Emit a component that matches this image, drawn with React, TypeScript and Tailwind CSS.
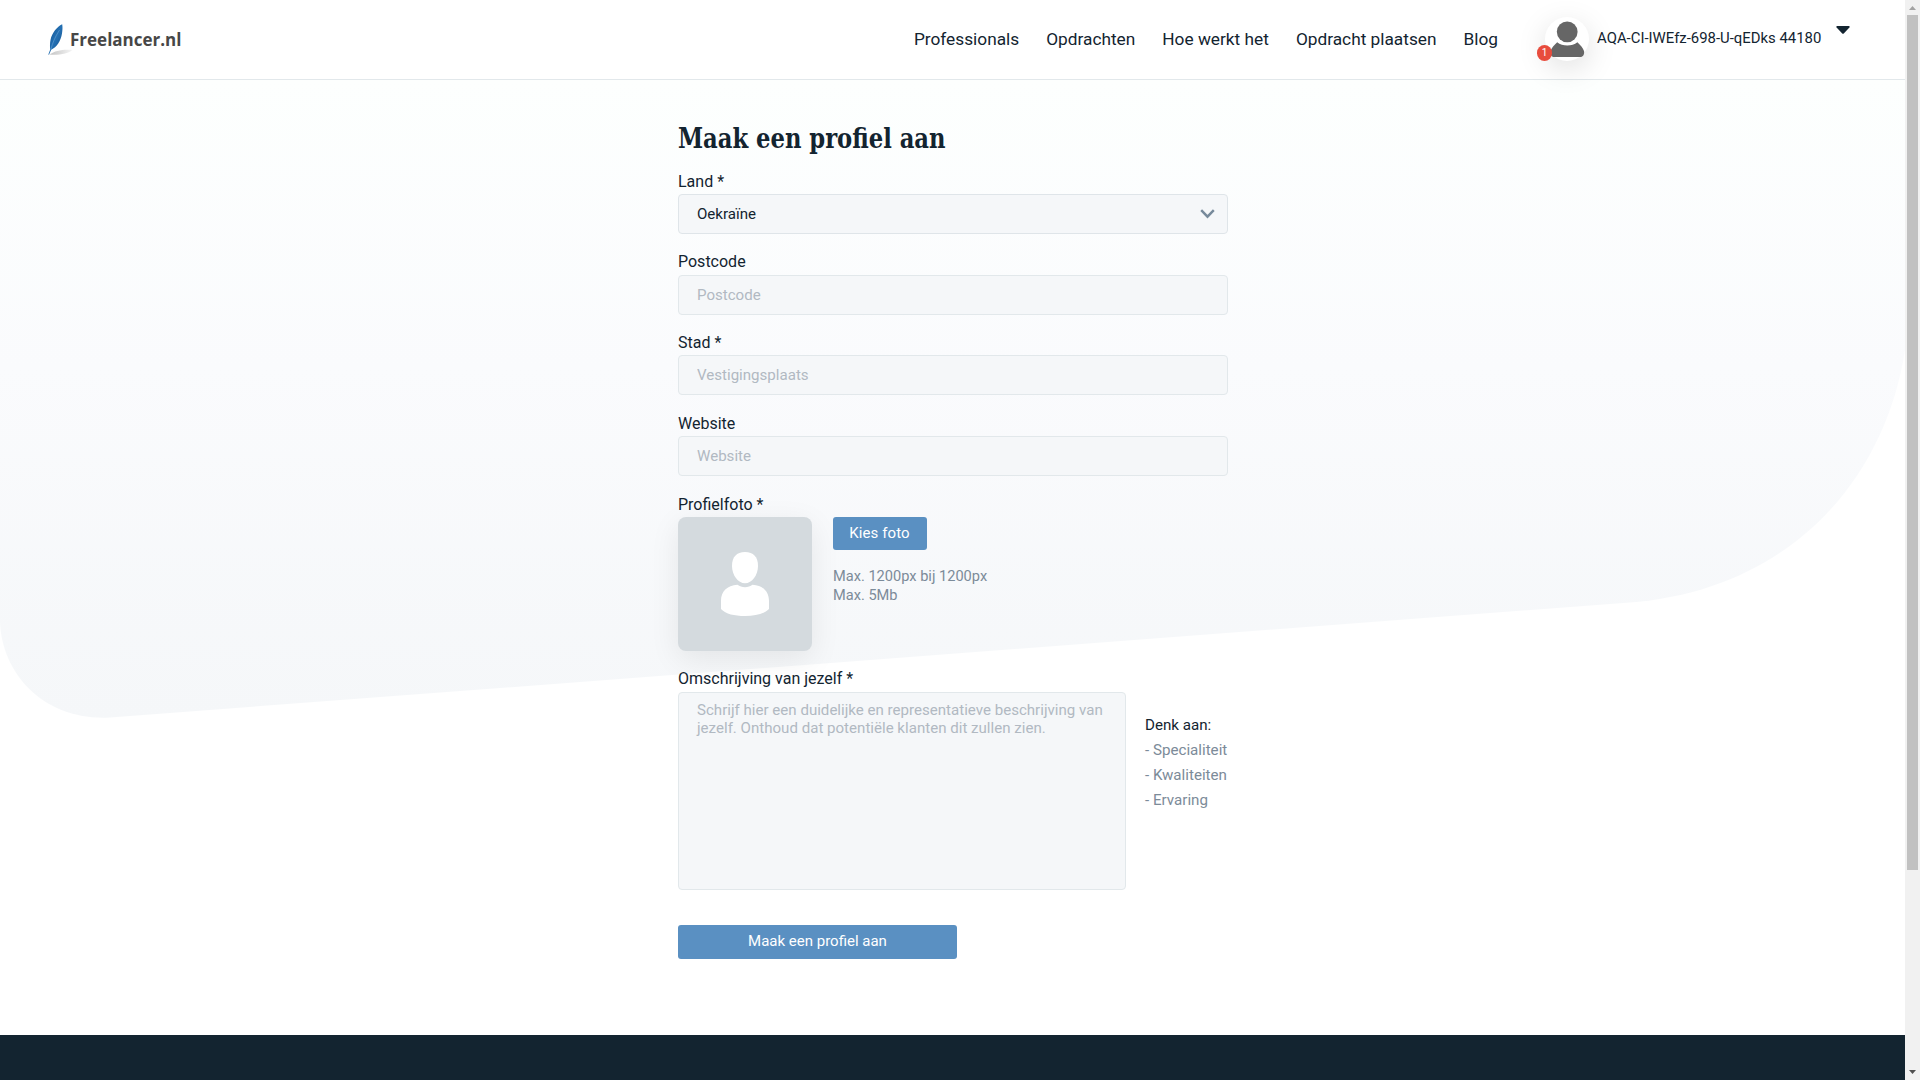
import React from "react";

const NAV = ["Professionals", "Opdrachten", "Hoe werkt het", "Opdracht plaatsen", "Blog"];

function Logo() {
  return (
    <a className="flex h-[34px] w-[140px] shrink-0" href="#">
      <svg className="h-[34px] w-[26px] shrink-0" viewBox="0 0 26 34" fill="none">
        <defs>
          <linearGradient id="feather" x1="0" y1="0" x2="1" y2="1">
            <stop offset="0" stopColor="#0f4f8c" />
            <stop offset="0.5" stopColor="#2470b3" />
            <stop offset="1" stopColor="#174f86" />
          </linearGradient>
          <linearGradient id="shade" x1="0" y1="0" x2="1" y2="0">
            <stop offset="0" stopColor="#c4c4c4" />
            <stop offset="1" stopColor="#f6f6f6" />
          </linearGradient>
        </defs>
        <path d="M1.5 31.5 C7 27.5 16 26 24.5 27 C21 30.5 10 32.5 1.5 31.5Z" fill="url(#shade)" />
        <path d="M14.2 1.2 C9 3.5 4 10 2.6 16.5 C1.800 20 1.900 24 2.2 26.6 L0.3 31.4 L1 31.7 L3.2 26.8 C8.800 24 12.800 18 14 10.500 C14.500 7 14.700 4 14.200 1.200Z" fill="url(#feather)" />
        <path d="M3 26 C4.500 20 7 14 11.500 7" stroke="#8fbde3" strokeWidth="0.400" />
      </svg>
      <span className="-ml-[4px] mt-[5px] whitespace-nowrap font-['Open_Sans','Noto_Sans',sans-serif] text-[17px] font-bold leading-[24px] text-[#474747]">
        Freelancer.nl
      </span>
    </a>
  );
}

function Header() {
  return (
    <header className="relative z-10 flex h-[80px] w-full items-start border-b border-[#e2e8eb] bg-white pl-[48px] text-[#132430]">
      <div className="mt-[23px]">
        <Logo />
      </div>
      <nav className="ml-auto mr-[47px] mt-[28px] flex gap-[27px] text-[17.280px] leading-[22px]">
        {NAV.map((n) => (
          <a key={n} href="#" className="whitespace-nowrap">
            {n}
          </a>
        ))}
      </nav>
      <div className="relative mt-[17px] h-[44px] w-[44px] rounded-full bg-white shadow-[0_8px_30px_rgba(0,0,0,0.13)]">
        <svg className="h-[44px] w-[44px]" viewBox="0 0 44 44" fill="#666">
          <circle cx="22.200" cy="14.800" r="10.400" />
          <path d="M12.200 25.200 C17.500 29.600 27 29.600 32.400 25.200 C35.500 28 38 31 39 34 C39.600 36.500 38.300 39.900 36 39.900 H8.500 C6 39.900 5 36.500 5.600 34 C6.600 31 9 28 12.200 25.200Z" />
        </svg>
        <span className="absolute -left-[8px] top-[28px] flex h-[16px] w-[15px] items-center justify-center rounded-full bg-[#e84c3d] text-[10px] leading-none text-white">
          1
        </span>
      </div>
      <span className="ml-[8px] mt-[28px] w-[225px] whitespace-nowrap text-[14.9px] leading-[20px]">
        AQA-CI-IWEfz-698-U-qEDks 44180
      </span>
      <svg className="ml-[14px] mr-[55px] mt-[26px] h-[8px] w-[14px]" viewBox="0 0 14 8" fill="#132430">
        <path d="M1 0 H13 Q14.300 0.600 13.400 1.600 L8 7.300 Q7 8.300 6 7.300 L0.600 1.600 Q-0.300 0.600 1 0Z" />
      </svg>
    </header>
  );
}

function Label({ children }: { children: React.ReactNode }) {
  return <label className="mb-[3px] block h-[18.5px] text-[16px] leading-[18.5px]">{children}</label>;
}

function Field({ label, placeholder }: { label: string; placeholder: string }) {
  return (
    <div className="mb-[19px]">
      <Label>{label}</Label>
      <input
        className="block h-[40px] w-full rounded-[4px] border border-[#e2e8eb] bg-[#f5f7f9] px-[18px] text-[15.080px] outline-none placeholder:text-[#b1b9c2]"
        placeholder={placeholder}
      />
    </div>
  );
}

function Background() {
  return (
    <svg className="pointer-events-none absolute left-0 top-0 h-[1080px] w-[1905px]" viewBox="0 0 1905 1080">
      <defs>
        <linearGradient id="bg" gradientUnits="userSpaceOnUse" x1="0" y1="80" x2="0" y2="718">
          <stop offset="0" stopColor="#fdfffe" />
          <stop offset="0.450" stopColor="#fafbfd" />
          <stop offset="1" stopColor="#f5f7f9" />
        </linearGradient>
      </defs>
      <path d="M0 80 H1905 V350 C1885 480 1790 590 1630 602.500 L110 717.500 C45 721 2 675 0 622Z" fill="url(#bg)" />
    </svg>
  );
}

function Scrollbar() {
  return (
    <div className="flex h-full w-[15px] shrink-0 flex-col items-center bg-[#f1f1f1]">
      <svg className="h-[15px] w-[15px]" viewBox="0 0 15 15" fill="#a3a3a3">
        <path d="M4 10 L7.500 6 L11 10Z" />
      </svg>
      <div className="h-[855px] w-[11px] bg-[#c1c1c1]" />
      <svg className="mt-auto h-[15px] w-[15px]" viewBox="0 0 15 15" fill="#505050">
        <path d="M4 5 L7.500 9 L11 5Z" />
      </svg>
    </div>
  );
}

export default function App() {
  return (
    <div className="flex h-[1080px] w-[1920px] overflow-hidden bg-white font-[Roboto,sans-serif] text-[#132430]">
      <div className="relative flex h-full w-[1905px] flex-col">
        <Background />
        <Header />
        <main className="relative ml-[678px] w-[550px] flex-1 pt-[39px]">
          <h1 className="mb-[13.5px] h-[40px] origin-left scale-x-[0.9] whitespace-nowrap font-['DejaVu_Serif_Condensed','DejaVu_Serif',serif] text-[28px] font-bold leading-[40px]">
            Maak een profiel aan
          </h1>
          <div className="mb-[19px]">
            <Label>Land *</Label>
            <div className="flex h-[40px] items-center justify-between rounded-[4px] border border-[#dfe5e9] bg-[#f5f7f9] pl-[18px] pr-[12px] text-[15.080px]">
              <span>Oekraïne</span>
              <svg className="h-[10px] w-[15px]" viewBox="0 0 15 10" fill="none" stroke="#778a9b" strokeWidth="2.400">
                <path d="M1.200 1.200 L7.500 7.700 L13.800 1.200" />
              </svg>
            </div>
          </div>
          <Field label="Postcode" placeholder="Postcode" />
          <Field label="Stad *" placeholder="Vestigingsplaats" />
          <div className="pt-[0.5px]">
            <Field label="Website" placeholder="Website" />
          </div>
          <div className="pt-[0.5px]">
            <Label>Profielfoto *</Label>
          </div>
          <div className="mb-[19px] flex h-[134px]">
            <div className="flex h-[134px] w-[134px] items-center justify-center rounded-[8px] bg-[#d4dade] shadow-[0_8px_30px_rgba(0,0,0,0.08)]">
              <svg className="h-[64px] w-[48px]" viewBox="0 0 48 64" fill="#fff">
                <path d="M24 0 C32.500 0 37 5 37 14 C37 23 31 31.300 24 31.300 C17 31.300 11 23 11 14 C11 5 15.500 0 24 0Z" />
                <path d="M16.500 32.800 C20.500 36 27.500 36 31.500 32.800 C42 33.500 48 39.500 48 49 V57 C43 62 35 64 24 64 C13 64 5 62 0 57 V49 C0 39.500 6 33.500 16.500 32.800Z" />
              </svg>
            </div>
            <div className="ml-[21px]">
              <button className="block h-[33px] w-[94px] rounded-[3px] bg-[#5a90c2] pb-px pr-px text-[15px] tracking-[0.100px] text-white">
                Kies foto
              </button>
              <p className="mt-[17px] text-[14.6px] leading-[19px] text-[#7c8b99]">
                Max. 1200px bij 1200px
                <br />
                Max. 5Mb
              </p>
            </div>
          </div>
          <Label>Omschrijving van jezelf *</Label>
          <div className="flex">
            <textarea
              className="block h-[198px] w-[448px] shrink-0 resize-none rounded-[4px] border border-[#e2e8eb] bg-[#f5f7f9] py-[8px] pl-[18px] pr-[10px] text-[15.080px] leading-[18px] outline-none placeholder:text-[#b1b9c2]"
              placeholder="Schrijf hier een duidelijke en representatieve beschrijving van jezelf. Onthoud dat potentiële klanten dit zullen zien."
            />
            <ul className="ml-[19px] mt-[21px] whitespace-nowrap text-[15.150px] leading-[25px] text-[#7c8b99]">
              <li className="text-[#132430]">Denk aan:</li>
              <li>- Specialiteit</li>
              <li>- Kwaliteiten</li>
              <li>- Ervaring</li>
            </ul>
          </div>
          <button className="mt-[35px] block h-[34px] w-[279px] rounded-[3px] bg-[#5a90c2] pb-px text-[15px] text-white">
            Maak een profiel aan
          </button>
        </main>
        <footer className="relative h-[45px] w-full shrink-0 bg-[#132430]" />
      </div>
      <Scrollbar />
    </div>
  );
}
